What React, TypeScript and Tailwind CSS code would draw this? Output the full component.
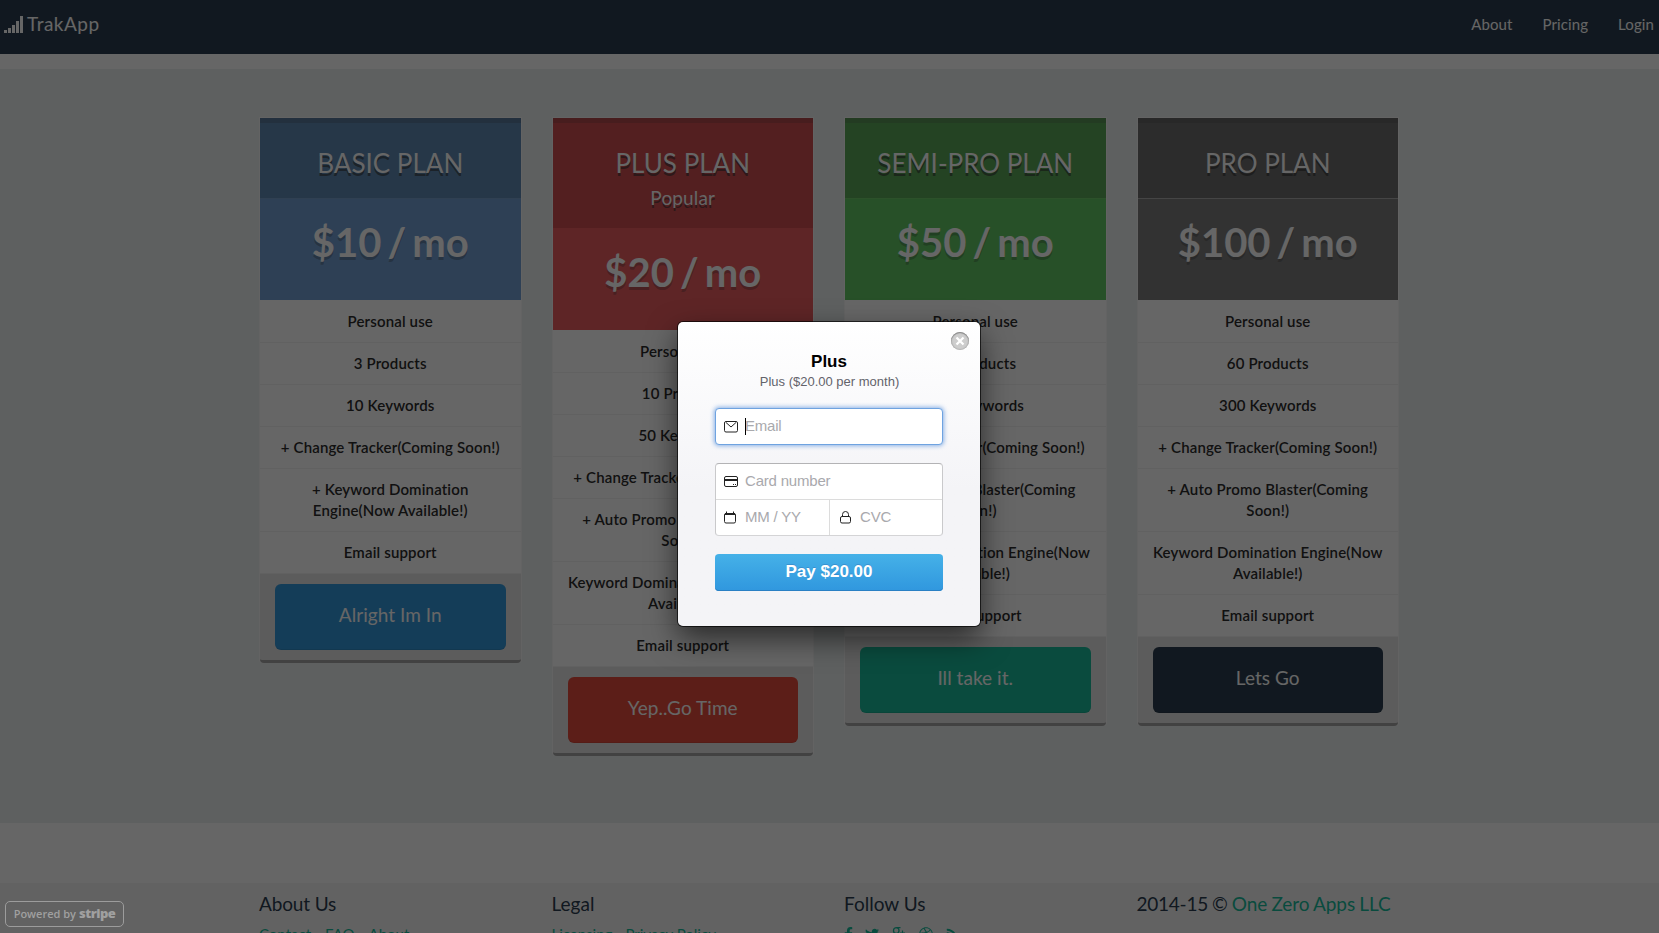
import React from "react";
import { FaFacebookF, FaTwitter, FaDribbble, FaRss } from "react-icons/fa";

type Plan = {
  name: string;
  tag?: string;
  price: string;
  features: string[];
  cta: string;
  head: string;
  body: string;
  button: string;
};

const plans: Plan[] = [
  {
    name: "BASIC PLAN",
    price: "$10 / mo",
    features: [
      "Personal use",
      "3 Products",
      "10 Keywords",
      "+ Change Tracker(Coming Soon!)",
      "+ Keyword Domination Engine(Now Available!)",
      "Email support",
    ],
    cta: "Alright Im In",
    head: "bg-[#5f8ab3] border-[#78a0cd] shadow-[inset_0_5px_0_#57799b]",
    body: "bg-[#73a0d4]",
    button: "bg-[#3498db]",
  },
  {
    name: "PLUS PLAN",
    tag: "Popular",
    price: "$20 / mo",
    features: [
      "Personal use",
      "10 Products",
      "50 Keywords",
      "+ Change Tracker(Coming Soon!)",
      "+ Auto Promo Blaster(Coming Soon!)",
      "Keyword Domination Engine(Now Available!)",
      "Email support",
    ],
    cta: "Yep..Go Time",
    head: "bg-[#cf4e52] border-[#eb5c60] shadow-[inset_0_5px_0_#b2494d]",
    body: "bg-[#eb5d60]",
    button: "bg-[#e74c3c]",
  },
  {
    name: "SEMI-PRO PLAN",
    price: "$50 / mo",
    features: [
      "Personal use",
      "30 Products",
      "150 Keywords",
      "+ Change Tracker(Coming Soon!)",
      "+ Auto Promo Blaster(Coming Soon!)",
      "Keyword Domination Engine(Now Available!)",
      "Email support",
    ],
    cta: "Ill take it.",
    head: "bg-[#5aa858] border-[#6fca6a] shadow-[inset_0_5px_0_#579355]",
    body: "bg-[#62c965]",
    button: "bg-[#1abc9c]",
  },
  {
    name: "PRO PLAN",
    price: "$100 / mo",
    features: [
      "Personal use",
      "60 Products",
      "300 Keywords",
      "+ Change Tracker(Coming Soon!)",
      "+ Auto Promo Blaster(Coming Soon!)",
      "Keyword Domination Engine(Now Available!)",
      "Email support",
    ],
    cta: "Lets Go",
    head: "bg-[#6e6e6e] border-[#adadad] shadow-[inset_0_5px_0_#646464]",
    body: "bg-[#7e7e7e]",
    button: "bg-[#2c3e50]",
  },
];

function PlanCard({ plan }: { plan: Plan }) {
  return (
    <div className="rounded-b-[4px] border border-b-0 border-[#f8f8f8] text-center">
      <div className={`border-b pt-[30px] pb-[20px] text-white ${plan.head}`}>
        <h3 className="text-[26px] leading-[30px] [text-shadow:0_3px_0_rgba(50,50,50,0.6)]">{plan.name}</h3>
        {plan.tag && (
          <p className="mt-[7px] -mb-[2px] text-[19px] leading-[25px] tracking-[0.15px] [text-shadow:0_3px_0_rgba(50,50,50,0.6)]">
            {plan.tag}
          </p>
        )}
      </div>
      <div
        className={`h-[101px] pt-[19px] text-[40px] leading-[48px] font-bold text-white [text-shadow:0_3px_0_rgba(50,50,50,0.3)] [word-spacing:-3.7px] ${plan.body}`}
      >
        {plan.price}
      </div>
      <ul className="bg-white pt-px text-[15px] leading-[21px] font-semibold tracking-[0.15px] text-[#2c2c2c]">
        {plan.features.map((f) => (
          <li key={f} className="border-b border-[#f2f2f2] px-[15px] py-[10px]">
            {f}
          </li>
        ))}
      </ul>
      <div className="rounded-b-[4px] border-b-[3px] border-[#a6a6a6] bg-[#e6e6e6] px-[15px] py-[10px]">
        <button
          className={`h-[66px] w-full rounded-[6px] pb-[6px] text-[19px] leading-[25px] tracking-[0.05px] text-white shadow-[inset_0_-1px_0_rgba(0,0,0,0.08)] ${plan.button}`}
        >
          {plan.cta}
        </button>
      </div>
    </div>
  );
}

function Footer() {
  return (
    <footer className="h-[50px] overflow-hidden bg-[#f5f5f5] pr-px">
      <div className="mx-auto grid w-[1170px] grid-cols-4 text-[#2c3e50]">
        <div className="px-[15px] pt-[8px]">
          <h4 className="text-[19px] leading-[26px] tracking-[-0.13px]">About Us</h4>
          <div className="mt-[7px] flex gap-[14px] text-[15px] leading-[21px] text-[#18bc9c]">
            <span>Contact</span>
            <span>FAQ</span>
            <span>About</span>
          </div>
        </div>
        <div className="px-[15px] pt-[8px]">
          <h4 className="text-[19px] leading-[26px]">Legal</h4>
          <div className="mt-[7px] flex gap-[13px] text-[15px] leading-[21px] text-[#18bc9c]">
            <span>Licensing</span>
            <span>Privacy Policy</span>
          </div>
        </div>
        <div className="px-[15px] pt-[8px]">
          <h4 className="text-[19px] leading-[26px]">Follow Us</h4>
          <div className="mt-[10px] flex items-start text-[#18bc9c]">
            <FaFacebookF className="mr-[12px] h-[14px] w-[9px]" />
            <FaTwitter className="mr-[13px] h-[15px] w-[14px]" />
            <svg viewBox="0 0 13 15" className="mr-[14px] h-[15px] w-[13px]" fill="none" stroke="currentColor">
              <path
                d="M8.5 .7H4.8C2.8 .7 1.5 2 1.5 3.8S2.8 6.5 4.3 6.5 7 5.3 7 3.6 6 .8 4.8 .8M5 6.5c0 2 3 2 3 4.5S6 14 4 14s-3.5-1-3.5-2.5S2.5 9 5.5 9"
                strokeWidth="1.3"
              />
              <path d="M10.5 3.5v5M8 6h5" strokeWidth="1.2" />
            </svg>
            <FaDribbble className="mr-[13px] h-[14px] w-[14px]" />
            <FaRss className="mt-px h-[12px] w-[12px]" />
          </div>
        </div>
        <div className="px-[15px] pt-[8px]">
          <h4 className="text-[19px] leading-[26px] tracking-[-0.08px] whitespace-nowrap [word-spacing:-0.5px]">
            <span className="tracking-[-0.25px]">2014-15 © </span>
            <span className="text-[#18bc9c]">One Zero Apps LLC</span>
          </h4>
        </div>
      </div>
    </footer>
  );
}

function MailIcon() {
  return (
    <svg width="14" height="12" viewBox="0 0 14 12" fill="none" stroke="#222">
      <rect x=".5" y=".5" width="13" height="10.5" rx="1.5" />
      <path d="M2 1.5l5 4.5 5-4.5" />
    </svg>
  );
}

function CardIcon() {
  return (
    <svg width="14" height="12" viewBox="0 0 14 12" fill="none" stroke="#222">
      <rect x=".5" y=".5" width="13" height="10" rx="1.5" />
      <path d="M0 4h14" strokeWidth="2" />
      <path d="M9 8.5h1M11 8.5h1" />
    </svg>
  );
}

function CalendarIcon() {
  return (
    <svg width="12" height="13" viewBox="0 0 12 13" fill="none" stroke="#222">
      <rect x=".5" y="2.5" width="11" height="9.5" rx="1.5" />
      <path d="M1 3h10" strokeWidth="2" />
      <path d="M2.5 .5v2M9.5 .5v2" />
    </svg>
  );
}

function LockIcon() {
  return (
    <svg width="11" height="13" viewBox="0 0 11 13" fill="none" stroke="#222">
      <rect x=".5" y="5.5" width="10" height="6.5" rx="1.5" />
      <path d="M2.5 5.5v-2a3 3 0 0 1 6 0v2" />
    </svg>
  );
}

function CheckoutDialog() {
  return (
    <div className="absolute top-[322px] left-[678px] h-[304px] w-[302px] rounded-[5px] bg-linear-to-b from-white to-[#f4f4f7] to-55% px-[37px] pt-[30px] font-['Liberation_Sans',Arial,sans-serif] shadow-[0_0_0_1px_rgba(0,0,0,0.65),0_12px_30px_rgba(0,0,0,0.6)]">
      <button className="absolute top-[10px] right-[11px] flex h-[18px] w-[18px] items-center justify-center rounded-full bg-[#cdcdcd] shadow-[inset_0_1px_1px_#888,inset_0_0_1px_1px_#b5b5b5]">
        <svg width="10" height="10" viewBox="0 0 10 10" stroke="#fff" strokeWidth="2.2">
          <path d="M1.5 1.5l7 7M8.5 1.5l-7 7" />
        </svg>
      </button>
      <h1 className="text-center text-[17px] leading-[20px] font-bold text-black">Plus</h1>
      <h2 className="mt-[2px] pl-px text-center text-[13px] leading-[16px] text-[#63636b]">Plus ($20.00 per month)</h2>
      <div className="mt-[18px] flex h-[37px] items-center rounded-[4px] border border-[#6fa3e0] bg-white pl-[8px] text-[15px] tracking-[-0.2px] text-[#a9a9ad] shadow-[0_0_4px_1px_rgba(80,140,220,0.65)]">
        <MailIcon />
        <span className="z-10 ml-[7px] h-[17px] w-px bg-black" />
        <span className="-ml-px pb-[2px] leading-[18px]">Email</span>
      </div>
      <div className="mt-[18px] rounded-[4px] border border-t-[#b3b3b5] border-r-[#c9c9cb] border-b-[#d4d4d6] border-l-[#c9c9cb] bg-white text-[15px] tracking-[-0.2px] text-[#a9a9ad]">
        <div className="flex h-[36px] items-center border-b border-[#dcdcdc] pl-[8px]">
          <CardIcon />
          <span className="ml-[7px] pb-[2px] leading-[18px]">Card number</span>
        </div>
        <div className="flex h-[35px]">
          <div className="flex w-[114px] items-center border-r border-[#dcdcdc] pl-[8px]">
            <CalendarIcon />
            <span className="ml-[9px] pb-[2px] leading-[18px]">MM / YY</span>
          </div>
          <div className="flex flex-1 items-center pl-[10px]">
            <LockIcon />
            <span className="ml-[9px] pb-[2px] leading-[18px]">CVC</span>
          </div>
        </div>
      </div>
      <button className="mt-[18px] h-[37px] w-full rounded-[4px] bg-linear-to-b from-[#45b1e8] to-[#3097de] pb-[2px] text-[17px] leading-[20px] font-bold text-white shadow-[inset_0_-1px_0_#2a80c4] [text-shadow:0_-1px_0_rgba(46,86,153,0.3)]">
        Pay $20.00
      </button>
    </div>
  );
}

export default function App() {
  return (
    <div className="relative h-[933px] w-full overflow-hidden bg-white font-[Lato,sans-serif] [font-variant-ligatures:none]">
      <nav className="flex h-[54px] items-center justify-between bg-[#2c3e50] pr-[5px] pb-[6px] pl-[4px] text-white">
        <div className="flex items-center gap-[3px]">
          <svg width="20" height="17" viewBox="0 0 20 17" fill="currentColor">
            <path d="M0 14h3v3H0zM4 12h3v5H4zM8 9h3v8H8zM12 5h3v12h-3zM16 0h3v17h-3z" />
          </svg>
          <span className="text-[19px] leading-[24px] tracking-[0.5px]">TrakApp</span>
        </div>
        <div className="flex gap-[30px] text-[15px] leading-[21px] tracking-[0.1px]">
          <span>About</span>
          <span>Pricing</span>
          <span>Login</span>
        </div>
      </nav>
      <main className="mt-[15px] mb-[60px] h-[754px] bg-[#ecf0f1] pt-[48px] pr-px">
        <div className="mx-auto grid w-[1170px] grid-cols-4 items-start">
          {plans.map((p) => (
            <div key={p.name} className="px-[15px]">
              <PlanCard plan={p} />
            </div>
          ))}
        </div>
      </main>
      <Footer />
      <div className="absolute inset-0 bg-black/60" />
      <div className="absolute top-[901px] left-[5px] flex h-[26px] w-[119px] items-center justify-center gap-[3px] rounded-[5px] border border-[#9c9c9c] font-['Open_Sans',sans-serif] text-[#a0a0a0]">
        <span className="text-[11px] font-semibold">Powered by</span>
        <span className="text-[13px] font-extrabold tracking-[-0.5px]">stripe</span>
      </div>
      <CheckoutDialog />
    </div>
  );
}
